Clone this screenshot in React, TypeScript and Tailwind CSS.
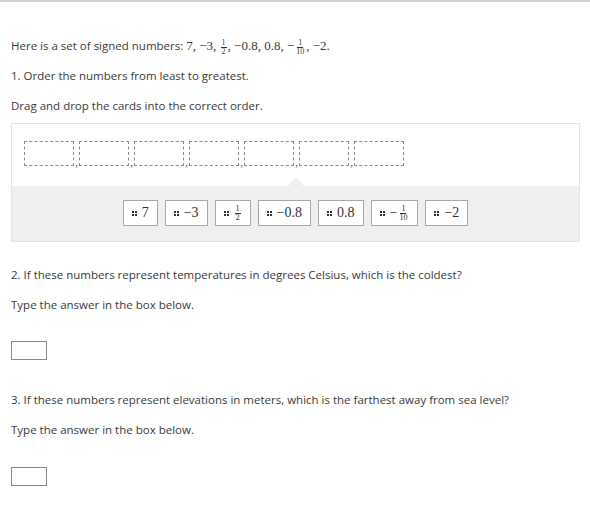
import React from 'react';

function Frac({ num, den }: { num: string; den: string }) {
  return (
    <span className="mx-[1px] inline-flex flex-col items-center align-middle text-[8px] leading-[8px]">
      <span className="border-b border-[#333] px-[1px]">{num}</span>
      <span className="px-[1px]">{den}</span>
    </span>
  );
}

function Dots() {
  return (
    <span className="mr-[5px] grid grid-cols-2 gap-[1px]">
      <span className="h-[2px] w-[2px] bg-[#333]" />
      <span className="h-[2px] w-[2px] bg-[#333]" />
      <span className="h-[2px] w-[2px] bg-[#333]" />
      <span className="h-[2px] w-[2px] bg-[#333]" />
    </span>
  );
}

const CARDS: { key: string; node: React.ReactNode }[] = [
  { key: '7', node: '7' },
  { key: '-3', node: '−3' },
  { key: '1/2', node: <Frac num="1" den="2" /> },
  { key: '-0.8', node: '−0.8' },
  { key: '0.8', node: '0.8' },
  { key: '-1/10', node: <>−<Frac num="1" den="10" /></> },
  { key: '-2', node: '−2' },
];

export default function App() {
  return (
    <div className="min-h-[514px] border-t-2 border-[#cfcfcf] bg-white font-['Open_Sans','Liberation_Sans',sans-serif] text-[11.5px] leading-4 text-[#3a3a3a]">
      <div className="px-[11px]">
        <p className="mt-[36px] h-4">
          Here is a set of signed numbers:{' '}
          <span className="font-['Liberation_Serif','DejaVu_Serif',serif] text-[13px]">
            7, −3, <Frac num="1" den="2" />, −0.8, 0.8, −<Frac num="1" den="10" />, −2.
          </span>
        </p>
        <p className="mt-[14px]">1. Order the numbers from least to greatest.</p>
        <p className="mt-[14px]">Drag and drop the cards into the correct order.</p>
      </div>

      {/* drag and drop area */}
      <div className="ml-[11px] mt-[9px] w-[569px] border border-[#e4e4e4]">
        <div className="flex h-[62px] items-start px-[12px] pt-[17px]">
          {Array.from({ length: 7 }).map((_, i) => (
            <React.Fragment key={i}>
              {i > 0 && (
                <span className="flex h-[27px] w-[5px] items-end justify-center font-['Liberation_Serif',serif] text-[11px] leading-[12px]">,</span>
              )}
              <div className="h-[25px] w-[50px] border border-dashed border-[#8a8a8a]" />
            </React.Fragment>
          ))}
        </div>
        <div className="relative flex h-[55px] items-start justify-center gap-[7px] bg-[#efefef] pt-[14px]">
          <span className="absolute left-[276px] top-[-9px] h-0 w-0 border-x-[8px] border-b-[9px] border-x-transparent border-b-[#efefef]" />
          {CARDS.map((c) => (
            <div
              key={c.key}
              className="flex h-[26px] items-center border border-[#a9a9a9] bg-white px-[8px] font-['Liberation_Serif','DejaVu_Serif',serif] text-[14px] text-[#333]"
            >
              <Dots />
              <span className="flex items-center">{c.node}</span>
            </div>
          ))}
        </div>
      </div>

      <div className="px-[11px]">
        <p className="mt-[25px]">2. If these numbers represent temperatures in degrees Celsius, which is the coldest?</p>
        <p className="mt-[14px]">Type the answer in the box below.</p>
        <input className="mt-[28px] block h-[19px] w-[36px] border border-[#8a8a8a] outline-none" />

        <p className="mt-[32px]">3. If these numbers represent elevations in meters, which is the farthest away from sea level?</p>
        <p className="mt-[14px]">Type the answer in the box below.</p>
        <input className="mt-[29px] block h-[19px] w-[36px] border border-[#8a8a8a] outline-none" />
      </div>
    </div>
  );
}
